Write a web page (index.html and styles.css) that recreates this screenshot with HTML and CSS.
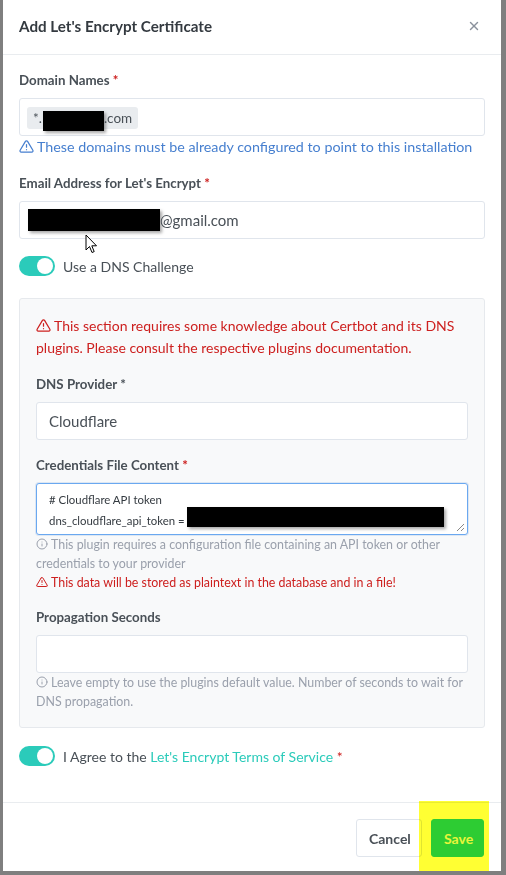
FILE: index.html
```html
<!DOCTYPE html>
<html>
<head>
<meta charset="utf-8">
<link rel="stylesheet" href="styles.css">
</head>
<body>
<div class="modal">
  <div class="modal-header">
    <h5 class="modal-title">Add Let's Encrypt Certificate</h5>
    <svg class="close" width="14" height="14" viewBox="0 0 24 24" fill="none" stroke="currentColor" stroke-width="2.4" stroke-linecap="round"><line x1="18" y1="6" x2="6" y2="18"/><line x1="6" y1="6" x2="18" y2="18"/></svg>
  </div>
  <div class="modal-body">
    <div class="group">
      <label class="form-label">Domain Names <span class="req">*</span></label>
      <div class="input chips"><span class="chip">*.<span class="redact r-chip"></span>.com</span></div>
      <div class="hint blue"><svg class="ico" viewBox="0 0 24 24" fill="none" stroke="currentColor" stroke-width="2" stroke-linecap="round" stroke-linejoin="round"><path d="M10.29 3.86L1.82 18a2 2 0 0 0 1.71 3h16.94a2 2 0 0 0 1.71-3L13.71 3.86a2 2 0 0 0-3.42 0z"/><line x1="12" y1="9" x2="12" y2="13"/><line x1="12" y1="17" x2="12.01" y2="17"/></svg>These domains must be already configured to point to this installation</div>
    </div>
    <div class="group">
      <label class="form-label">Email Address for Let's Encrypt <span class="req">*</span></label>
      <div class="input"><span class="redact r-mail"></span>@gmail.com</div>
    </div>
    <div class="group switch-row">
      <span class="switch"><span class="knob"></span></span>
      <span class="switch-label">Use a DNS Challenge</span>
    </div>
    <div class="panel">
      <div class="warn big"><svg class="ico" viewBox="0 0 24 24" fill="none" stroke="currentColor" stroke-width="2" stroke-linecap="round" stroke-linejoin="round"><path d="M10.29 3.86L1.82 18a2 2 0 0 0 1.71 3h16.94a2 2 0 0 0 1.71-3L13.71 3.86a2 2 0 0 0-3.42 0z"/><line x1="12" y1="9" x2="12" y2="13"/><line x1="12" y1="17" x2="12.01" y2="17"/></svg>This section requires some knowledge about Certbot and its DNS plugins. Please consult the respective plugins documentation.</div>
      <div class="group">
        <label class="form-label">DNS Provider *</label>
        <div class="input select">Cloudflare</div>
      </div>
      <div class="group">
        <label class="form-label">Credentials File Content <span class="req">*</span></label>
        <div class="textarea">
          <div class="code-line"># Cloudflare API token</div>
          <div class="code-line">dns_cloudflare_api_token =<span class="redact r-token"></span></div>
          <svg class="grip" width="10" height="10" viewBox="0 0 10 10" stroke="#888" stroke-width="1"><line x1="9" y1="2" x2="2" y2="9"/><line x1="9" y1="6" x2="6" y2="9"/></svg>
        </div>
        <div class="small muted"><svg class="ico sm" viewBox="0 0 24 24" fill="none" stroke="currentColor" stroke-width="2" stroke-linecap="round" stroke-linejoin="round"><circle cx="12" cy="12" r="10"/><line x1="12" y1="16" x2="12" y2="12"/><line x1="12" y1="8" x2="12.01" y2="8"/></svg>This plugin requires a configuration file containing an API token or other credentials to your provider</div>
        <div class="small red"><svg class="ico sm" viewBox="0 0 24 24" fill="none" stroke="currentColor" stroke-width="2" stroke-linecap="round" stroke-linejoin="round"><path d="M10.29 3.86L1.82 18a2 2 0 0 0 1.71 3h16.94a2 2 0 0 0 1.71-3L13.71 3.86a2 2 0 0 0-3.42 0z"/><line x1="12" y1="9" x2="12" y2="13"/><line x1="12" y1="17" x2="12.01" y2="17"/></svg>This data will be stored as plaintext in the database and in a file!</div>
      </div>
      <div class="group last">
        <label class="form-label">Propagation Seconds</label>
        <div class="input"></div>
        <div class="small muted"><svg class="ico sm" viewBox="0 0 24 24" fill="none" stroke="currentColor" stroke-width="2" stroke-linecap="round" stroke-linejoin="round"><circle cx="12" cy="12" r="10"/><line x1="12" y1="16" x2="12" y2="12"/><line x1="12" y1="8" x2="12.01" y2="8"/></svg>Leave empty to use the plugins default value. Number of seconds to wait for DNS propagation.</div>
      </div>
    </div>
    <div class="group switch-row agree">
      <span class="switch"><span class="knob"></span></span>
      <span class="switch-label">I Agree to the <a class="link">Let's Encrypt Terms of Service</a> <span class="req">*</span></span>
    </div>
  </div>
  <div class="modal-footer">
    <button class="btn btn-cancel">Cancel</button>
    <button class="btn btn-save">Save</button>
    <div class="highlight"></div>
  </div>
  <svg class="cursor" width="13" height="20" viewBox="0 0 13 20"><path d="M1 1 L1 16 L4.5 12.5 L7 18.5 L9.2 17.6 L6.8 11.8 L11.5 11.8 Z" fill="#fff" stroke="#000" stroke-width="1"/></svg>
</div>
</body>
</html>
```
FILE: styles.css
```css
* { box-sizing: border-box; }
html, body { margin: 0; padding: 0; }
body {
  background: #7f7f7f;
  font-family: Lato, "Liberation Sans", sans-serif;
  font-size: 14px;
  color: #495057;
  height: 875px;
  overflow: hidden;
}
.modal {
  position: relative;
  margin-left: 3px;
  width: 498px;
  height: 871px;
  background: #fff;
  display: flex;
  flex-direction: column;
}
.modal-header {
  height: 55px;
  border-bottom: 1px solid #e9ecef;
  display: flex;
  align-items: center;
  justify-content: space-between;
  padding: 0 20px 0 16px;
}
.modal-title {
  margin: 0;
  font-size: 15.2px;
  font-weight: 700;
  color: #343a40;
  padding-bottom: 2px;
}
.close { color: #8a919c; margin-top: -2px; }
.modal-body {
  padding: 16px 16px 0 16px;
  flex: 1;
}
.group { margin-bottom: 16px; }
.group.last { margin-bottom: 0; }
.form-label {
  display: block;
  font-size: 13.3px;
  font-weight: 700;
  line-height: 19px;
  margin-bottom: 8px;
  color: #495057;
}
.req { color: #cd201f; }
.input {
  height: 38px;
  border: 1px solid #e0e5ec;
  border-radius: 3px;
  background: #fff;
  padding: 0 12px 0 7px;
  display: flex;
  align-items: center;
  font-size: 15px;
  color: #495057;
}
.input.select { padding-left: 12px; }
.chip {
  display: inline-flex;
  align-items: center;
  height: 22px;
  background: #e9ecef;
  border-radius: 3px;
  padding: 0 6px;
  font-size: 13.5px;
  color: #495057;
  margin-top: 2px;
}
.redact {
  display: inline-block;
  background: #000;
  box-shadow: 2px 2px 3px rgba(0,0,0,0.35);
}
.r-chip { width: 61px; height: 20px; margin: 6px 0 0 1px; }
.r-mail { width: 132px; height: 22px; margin-left: 1px; }
.r-token { width: 257px; height: 20px; margin-left: 2px; vertical-align: middle; position: relative; top: -5px; }
.hint {
  line-height: 22px;
  font-size: 14.3px;
}
.blue { color: #467fcf; }
.ico { width: 15px; height: 15px; vertical-align: -2px; margin-right: 3px; }
.ico.sm { width: 12px; height: 12px; vertical-align: -1px; margin-right: 3px; }
.switch-row {
  display: flex;
  align-items: center;
  height: 22px;
  margin-bottom: 21px;
}
.switch {
  width: 36px;
  height: 20px;
  border-radius: 10px;
  background: #2bcbba;
  position: relative;
  flex: none;
}
.knob {
  position: absolute;
  right: 2px;
  top: 2px;
  width: 16px;
  height: 16px;
  border-radius: 50%;
  background: #fff;
}
.switch-label {
  margin-left: 8px;
  font-size: 14px;
  color: #495057;
}
.link { color: #2bcbba; text-decoration: none; }
.panel {
  background: #f8f9fa;
  border: 1px solid #e6e9ed;
  border-radius: 3px;
  padding: 16px;
}
.warn.big {
  color: #cd201f;
  font-size: 14px;
  line-height: 22px;
  margin-bottom: 16px;
}
.textarea {
  position: relative;
  height: 52px;
  border: 1px solid #6aa8f0;
  border-radius: 3px;
  background: #fff;
  box-shadow: 0 0 0 1px rgba(70,127,207,0.15);
  padding: 5px 12px;
  font-size: 11.4px;
  color: #343a40;
}
.code-line { line-height: 21px; height: 21px; white-space: nowrap; }
.grip { position: absolute; right: 2px; bottom: 2px; }
.small { font-size: 12.4px; line-height: 19px; }
.muted { color: #9aa0ac; }
.red { color: #cd201f; }
.agree { margin-top: 17px; margin-bottom: 0; }
.modal-footer {
  position: relative;
  height: 69px;
  border-top: 1px solid #e9ecef;
  display: flex;
  align-items: center;
  justify-content: flex-end;
  gap: 9px;
  padding: 2px 17px 0 0;
}
.btn {
  height: 38px;
  border-radius: 3px;
  font-family: Lato, "Liberation Sans", sans-serif;
  font-size: 14px;
  font-weight: 700;
  padding: 0 12px;
}
.btn-cancel {
  background: #fff;
  border: 1px solid #e0e5ec;
  color: #495057;
  width: 66px;
}
.btn-save {
  position: relative;
  z-index: 2;
  background: #2dcc33;
  border: 1px solid #2dcc33;
  color: #e8f53a;
  width: 53px;
}
.highlight {
  position: absolute;
  z-index: 1;
  left: 416px;
  top: -2px;
  width: 70px;
  height: 70px;
  background: #ffff33;
  mix-blend-mode: multiply;
  pointer-events: none;
}
.cursor {
  position: absolute;
  left: 82px;
  top: 234px;
}
```
